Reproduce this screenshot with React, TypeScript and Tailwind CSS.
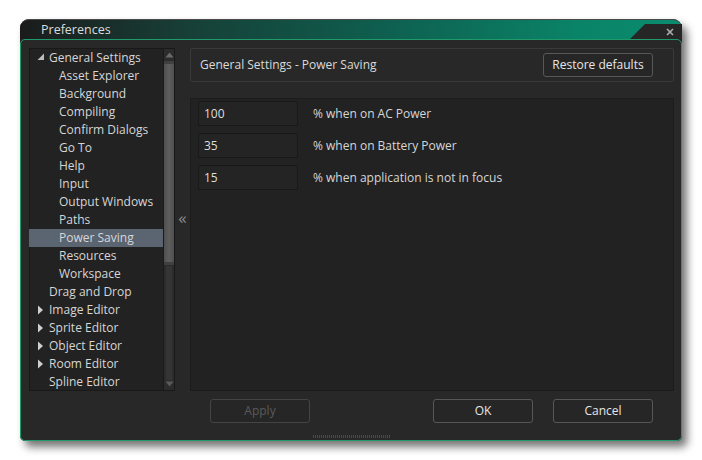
import React from "react";

type TreeItem = { label: string; level: number; arrow?: "open" | "closed"; selected?: boolean };

const tree: TreeItem[] = [
  { label: "General Settings", level: 0, arrow: "open" },
  { label: "Asset Explorer", level: 1 },
  { label: "Background", level: 1 },
  { label: "Compiling", level: 1 },
  { label: "Confirm Dialogs", level: 1 },
  { label: "Go To", level: 1 },
  { label: "Help", level: 1 },
  { label: "Input", level: 1 },
  { label: "Output Windows", level: 1 },
  { label: "Paths", level: 1 },
  { label: "Power Saving", level: 1, selected: true },
  { label: "Resources", level: 1 },
  { label: "Workspace", level: 1 },
  { label: "Drag and Drop", level: 0 },
  { label: "Image Editor", level: 0, arrow: "closed" },
  { label: "Sprite Editor", level: 0, arrow: "closed" },
  { label: "Object Editor", level: 0, arrow: "closed" },
  { label: "Room Editor", level: 0, arrow: "closed" },
  { label: "Spline Editor", level: 0 },
];

const fields = [
  { value: "100", label: "% when on AC Power" },
  { value: "35", label: "% when on Battery Power" },
  { value: "15", label: "% when application is not in focus" },
];

function Arrow({ kind }: { kind: "open" | "closed" }) {
  if (kind === "open") {
    return (
      <svg width="8" height="8" viewBox="0 0 8 8" className="absolute left-[7px] top-[4px]">
        <path d="M7 0.5 L7 7 L0.5 7 Z" fill="#bdbdbd" />
      </svg>
    );
  }
  return (
    <svg width="7" height="10" viewBox="0 0 7 10" className="absolute left-[7px] top-[4px]">
      <path d="M1 0.5 L6 5 L1 9.5 Z" fill="#cfcfcf" />
    </svg>
  );
}

function Button({ children, disabled }: { children: React.ReactNode; disabled?: boolean }) {
  return (
    <button
      className={
        "w-[100px] h-[24px] rounded-[3px] border bg-[#262626] text-[12px] leading-none " +
        (disabled ? "border-[#444] text-[#5a5a5a]" : "border-[#575757] text-[#e6e6e6]")
      }
    >
      {children}
    </button>
  );
}

export default function App() {
  return (
    <div className="w-[702px] h-[460px] bg-white pl-[20px] pt-[19px] font-['Open_Sans',sans-serif]">
      <div className="w-[662px] h-[422px] flex flex-col rounded-t-[9px] rounded-b-[5px] bg-[#262626] shadow-[5px_6px_8px_rgba(0,0,0,0.55)]">
        {/* title bar */}
        <div className="relative h-[20px] rounded-t-[9px] border-t border-[#4a4a4a] bg-[linear-gradient(to_right,#1b1b1b,#173f37_25%,#0e5f4f_55%,#0a8468_85%,#0a8c6e)] flex items-center">
          <span className="pl-[21px] pt-[2px] text-[12.5px] text-[#dcdcdc] leading-none">Preferences</span>
          <div className="absolute right-0 bottom-0 h-[15px] w-[52px] bg-[#262626] [clip-path:polygon(15px_0,100%_0,100%_100%,0_100%)] flex items-center justify-end pr-[8px]">
            <svg width="8" height="8" viewBox="0 0 8 8">
              <path d="M1 1 L7 7 M7 1 L1 7" stroke="#a9b0b4" strokeWidth="1.6" />
            </svg>
          </div>
        </div>

        {/* body */}
        <div className="flex-1 flex flex-col border border-[#1f9a6b] rounded-[5px] bg-[#282828] pt-[8px] pl-[8px] pr-[7px]">
          <div className="h-[343px] flex">
            {/* tree */}
            <div className="w-[146px] flex border border-[#191919] bg-[#222222]">
              <div className="flex-1">
                {tree.map((t) => (
                  <div
                    key={t.label}
                    className={
                      "relative h-[18px] flex items-center text-[12px] text-[#d6d6d6] whitespace-nowrap " +
                      (t.selected ? "bg-[#5b6571] -ml-[1px]" : "")
                    }
                    style={{ paddingLeft: t.level === 0 ? 19 : t.selected ? 30 : 29 }}
                  >
                    {t.arrow && <Arrow kind={t.arrow} />}
                    {t.label}
                  </div>
                ))}
              </div>
              <div className="w-[11px] flex flex-col items-center bg-[#2c2c2c] border-l border-[#1a1a1a]">
                <svg width="9" height="6" viewBox="0 0 9 6" className="mt-[3px]">
                  <path d="M4.5 0.5 L8.5 5.5 L0.5 5.5 Z" fill="#6a6a6a" />
                </svg>
                <div className="mt-[3px] w-[10px] h-[204px] bg-[linear-gradient(to_right,#4f4f4f,#5e5e5e_50%,#4f4f4f)] border-t-[3px] border-b-[3px] border-[#404040]" />
                <div className="flex-1 w-[6px] bg-[#353535] my-[1px]" />
                <svg width="9" height="6" viewBox="0 0 9 6" className="mb-[3px]">
                  <path d="M0.5 0.5 L8.5 0.5 L4.5 5.5 Z" fill="#5a5a5a" />
                </svg>
              </div>
            </div>

            {/* collapse handle */}
            <div className="w-[15px] flex items-center justify-center">
              <span className="text-[17px] text-[#8a8a8a] leading-none -mt-[4px]">«</span>
            </div>

            {/* right column */}
            <div className="flex-1 flex flex-col">
              <div className="h-[34px] flex items-center justify-between border border-[#3a3a3a] rounded-[2px] pl-[9px] pr-[20px]">
                <span className="text-[12px] text-[#dadada]">General Settings - Power Saving</span>
                <button className="w-[110px] h-[24px] rounded-[3px] border border-[#575757] bg-[#262626] text-[12px] text-[#e6e6e6] leading-none">
                  Restore defaults
                </button>
              </div>
              <div className="mt-[16px] flex-1 border border-[#1c1c1c] bg-[#222222] pt-[2px] pl-[7px] flex flex-col gap-[7px]">
                {fields.map((f) => (
                  <div key={f.value} className="flex items-center">
                    <div className="w-[100px] h-[25px] flex items-center pl-[5px] rounded-[2px] border border-[#191919] bg-[#242424] text-[12px] text-[#dedede]">
                      {f.value}
                    </div>
                    <span className="ml-[15px] text-[12px] text-[#d6d6d6]">{f.label}</span>
                  </div>
                ))}
              </div>
            </div>
          </div>

          {/* buttons */}
          <div className="mt-[8px] flex items-center pl-[181px] pr-[21px]">
            <Button disabled>Apply</Button>
            <div className="flex-1" />
            <Button>OK</Button>
            <div className="w-[20px]" />
            <Button>Cancel</Button>
          </div>

          <div className="mt-auto mb-[2px] mx-auto w-[78px] h-[3px] bg-[repeating-linear-gradient(to_right,#4a4a4a_0,#4a4a4a_1px,transparent_1px,transparent_2px)]" />
        </div>
      </div>
    </div>
  );
}
